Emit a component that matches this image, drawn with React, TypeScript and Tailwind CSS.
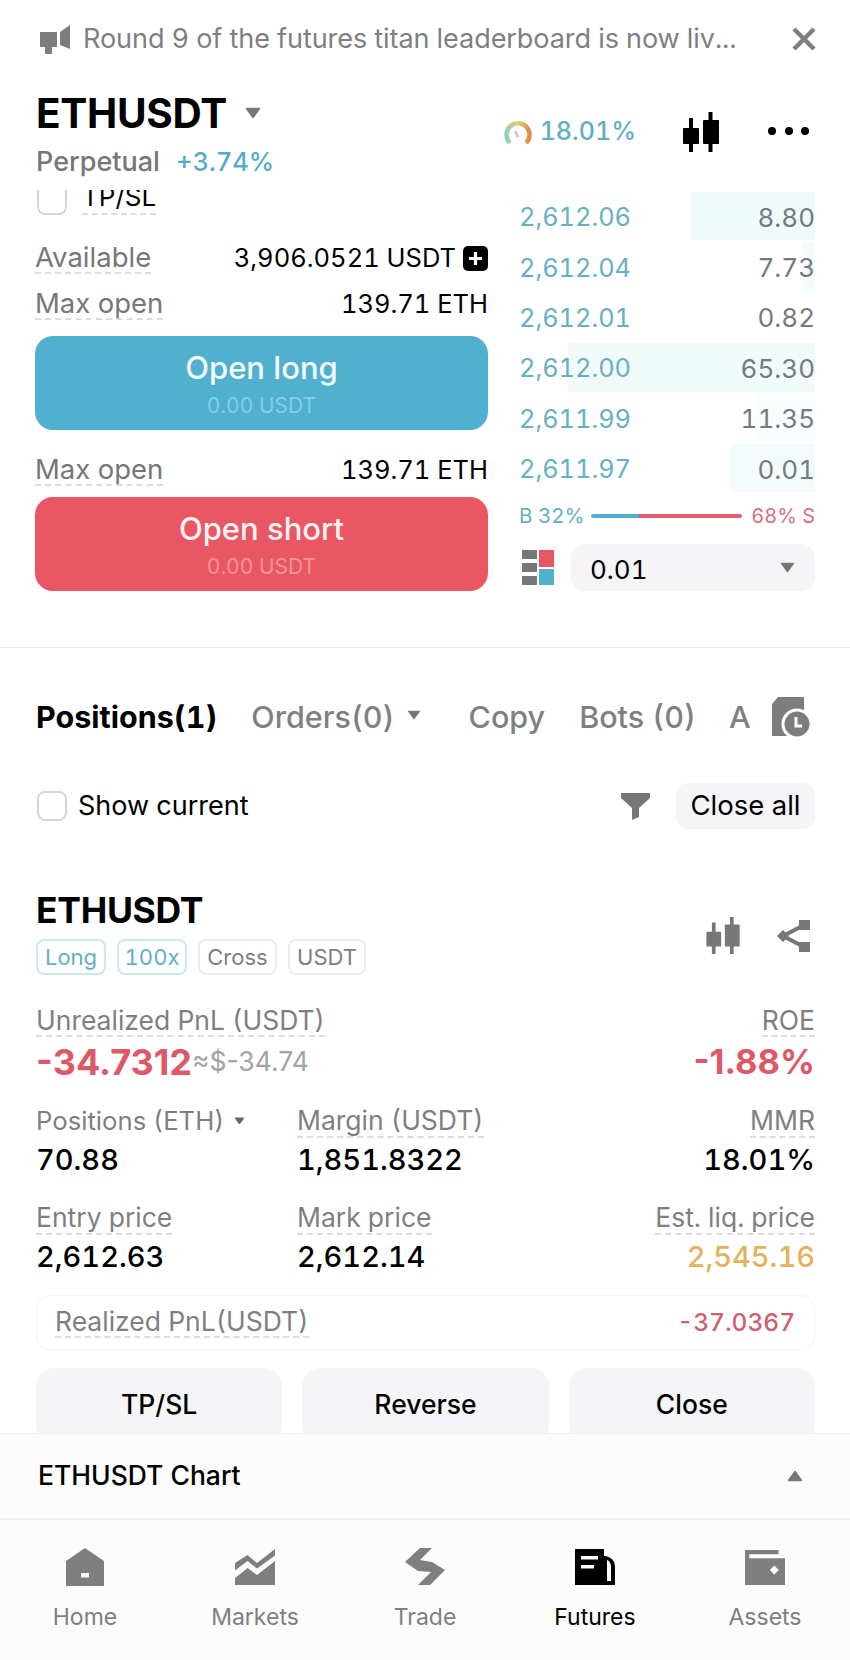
import React from 'react';

const Caret = ({ className = '' }: { className?: string }) => (
  <svg viewBox="0 0 16 12" className={className} fill="currentColor">
    <path d="M1.5 1.5h13L8 10.5z" stroke="currentColor" strokeWidth="1.5" strokeLinejoin="round" />
  </svg>
);

const Candles = ({ className = '' }: { className?: string }) => (
  <svg viewBox="0 0 36 40" className={className} fill="currentColor">
    <rect x="6" y="6" width="4" height="34" />
    <rect x="0" y="16" width="16" height="16" rx="1" />
    <rect x="25.5" y="0" width="4" height="40" />
    <rect x="20" y="8" width="16" height="24" rx="1" />
  </svg>
);

const Dashed = ({ children, className = '' }: { children: React.ReactNode; className?: string }) => (
  <span className={`border-b-2 border-dashed border-[#dcdcdc] leading-[30px] ${className}`}>{children}</span>
);

const Checkbox = () => <span className="block w-[30px] h-[30px] shrink-0 rounded-lg border-2 border-[#d6d6d6] bg-white" />;

const book = [
  { price: '2,612.06', size: '8.80', depth: 'w-[124px] bg-[#f0fbfb]' },
  { price: '2,612.04', size: '7.73', depth: 'w-[12px] bg-[#f5fcfc]' },
  { price: '2,612.01', size: '0.82', depth: 'w-0' },
  { price: '2,612.00', size: '65.30', depth: 'w-[247px] bg-[#f1fbfc]' },
  { price: '2,611.99', size: '11.35', depth: 'w-[60px] bg-[#f9fdfd]' },
  { price: '2,611.97', size: '0.01', depth: 'w-[85px] bg-[#f5fbfc]' },
];

const tabs = [
  {
    label: 'Home',
    icon: <path d="M20 1 39 14V39H1V14zM16 26v4.5h8V26z" fillRule="evenodd" />,
  },
  {
    label: 'Markets',
    icon: (
      <>
        <path d="M0 16 12.5 8 22 16 40 2v6.5L22 21.5 12.5 14 0 23.5z" />
        <path d="M0 31 12.5 21 22 28 40 14V38H0z" />
      </>
    ),
  },
  {
    label: 'Trade',
    icon: <path d="M15 1h12L15 13l12 2 13 8-15 15H13l13-13-13-1L0 15z" />,
  },
  {
    label: 'Futures',
    active: true,
    icon: (
      <path
        d="M0 2h29v7c7 0 11 5 11 11v18H0zM6 9v3.5h17V9zM6 18v3.5h13V18zM32 13v21h4V20c0-3-1-6-4-7z"
        fillRule="evenodd"
      />
    ),
  },
  {
    label: 'Assets',
    icon: <path d="M0 3h33.5v4.3H4.3v4H40V38H0zM29.3 18.5 24.8 23l4.5 4.5 4.5-4.5z" fillRule="evenodd" />,
  },
];

export default function App() {
  return (
    <div
      className="w-[850px] h-[1660px] overflow-hidden bg-white flex flex-col text-black tabular-nums"
      style={{ fontFamily: 'Inter, "Liberation Sans", sans-serif' }}
    >
      {/* Notice */}
      <div className="h-[78px] shrink-0 flex items-center pl-[39px] pr-[34px]">
        <svg viewBox="0 0 31 29" className="w-[31px] h-[29px] text-[#7d7d7d]" fill="currentColor">
          <path d="M1 7h17v15H13v7H6v-7H1zM21 7 31 0v24l-10-4z" />
        </svg>
        <div className="ml-[13px] flex-1 text-[27.1px] tracking-[-0.1px] text-[#7f7f7f] whitespace-nowrap overflow-hidden">
          Round 9 of the futures titan leaderboard is now liv...
        </div>
        <svg viewBox="0 0 24 24" className="w-[24px] h-[24px] text-[#808080]" fill="none" stroke="currentColor" strokeWidth="4.5">
          <path d="M2 2l20 20M22 2 2 22" />
        </svg>
      </div>

      {/* Symbol header */}
      <div className="h-[112px] shrink-0 pl-[36px] pr-[41px] flex items-start justify-between">
        <div>
          <div className="flex items-center h-[58px] pt-[15px]">
            <span className="text-[40.5px] font-bold leading-none tracking-[-0.3px]">ETHUSDT</span>
            <Caret className="w-[16px] h-[12px] ml-[18px] text-[#777] mb-[4px]" />
          </div>
          <div className="flex items-center mt-[11px] h-[30px]">
            <span className="text-[27px] font-medium text-[#777]">Perpetual</span>
            <span className="text-[25.5px] font-medium text-[#52aec8] ml-[16px]">+3.74%</span>
          </div>
        </div>
        <div className="flex items-center pt-[34px]">
          <svg viewBox="0 0 28 25" className="w-[28px] h-[25px]" fill="none" strokeWidth="4.5">
            <defs>
              <linearGradient id="gauge" x1="0" x2="1" y1="0" y2="0">
                <stop offset="0" stopColor="#8fd0b8" />
                <stop offset="0.5" stopColor="#e8d070" />
                <stop offset="1" stopColor="#dd8a4a" />
              </linearGradient>
            </defs>
            <path d="M6 23a11.5 11.5 0 1 1 16 0" stroke="url(#gauge)" />
            <path d="M11 11l3 6" stroke="#c4c4c4" strokeWidth="2.5" />
          </svg>
          <span className="ml-[8px] text-[25px] font-medium text-[#5fb0c6]">18.01%</span>
          <Candles className="w-[36px] h-[40px] ml-[47px] text-black" />
          <div className="flex gap-[8.5px] ml-[49px] pb-[2px]">
            <span className="w-[8px] h-[8px] rounded-full bg-black" />
            <span className="w-[8px] h-[8px] rounded-full bg-black" />
            <span className="w-[8px] h-[8px] rounded-full bg-black" />
          </div>
        </div>
      </div>

      {/* Order form + book */}
      <div className="h-[458px] shrink-0 flex pl-[35px] pr-[35px] border-b border-[#e9e9ec]">
        <div className="w-[453px] shrink-0">
          <div className="h-[25px] flex items-end overflow-hidden pl-[2px]">
            <Checkbox />
            <span className="ml-[15px] text-[26px] leading-[30px] h-[33px] shrink-0 border-b-2 border-dashed border-[#dcdcdc]">TP/SL</span>
          </div>
          <div className="flex items-center justify-between mt-[27px] h-[32px] text-[25.5px]">
            <Dashed className="text-[#777] text-[27.5px]">Available</Dashed>
            <div className="flex items-center">
              <span>3,906.0521 USDT</span>
              <span className="ml-[7px] w-[25px] h-[25px] rounded-[5px] bg-black text-white flex items-center justify-center">
                <svg viewBox="0 0 14 14" className="w-[15px] h-[15px]" stroke="currentColor" strokeWidth="3">
                  <path d="M7 1v12M1 7h12" />
                </svg>
              </span>
            </div>
          </div>
          <div className="flex items-center justify-between mt-[14px] h-[32px] text-[25.5px]">
            <Dashed className="text-[#777] text-[27.5px]">Max open</Dashed>
            <span>139.71 ETH</span>
          </div>
          <button className="mt-[16px] w-full h-[94px] pt-[8px] rounded-[18px] bg-[#52b0cf] flex flex-col items-center justify-center">
            <span className="text-[31px] font-medium leading-[38px] text-[#f3fbfb]">Open long</span>
            <span className="text-[21px] leading-[38px] text-[#7fd0ea]">0.00 USDT</span>
          </button>
          <div className="flex items-center justify-between mt-[24px] h-[32px] text-[25.5px]">
            <Dashed className="text-[#777] text-[27.5px]">Max open</Dashed>
            <span>139.71 ETH</span>
          </div>
          <button className="mt-[11px] w-full h-[94px] pt-[8px] rounded-[18px] bg-[#e95764] flex flex-col items-center justify-center">
            <span className="text-[31px] font-medium leading-[38px] text-[#fdf3f3]">Open short</span>
            <span className="text-[21px] leading-[38px] text-[#f8939b]">0.00 USDT</span>
          </button>
        </div>

        <div className="flex-1 ml-[31px] pt-[2px]">
          {book.map((row) => (
            <div key={row.price} className="relative h-[50.4px] flex items-center justify-between text-[26px]">
              <div className={`absolute right-0 top-0 bottom-[2px] ${row.depth}`} />
              <span className="relative text-[25.3px] text-[#64b0c4]">{row.price}</span>
              <span className="relative text-[#737b7d]">{row.size}</span>
            </div>
          ))}
          <div className="flex items-center h-[20px] mt-[12px] text-[20.5px]">
            <span className="text-[#64b0c4] w-[72px] whitespace-nowrap">B 32%</span>
            <div className="flex-1 flex h-[4px] rounded-full overflow-hidden">
              <div className="w-[32%] bg-[#52b0cf]" />
              <div className="flex-1 bg-[#e2606d]" />
            </div>
            <span className="text-[20px] text-[#d8707e] ml-[9px] whitespace-nowrap">68% S</span>
          </div>
          <div className="flex items-center mt-[18px]">
            <div className="ml-[3px] w-[32px] h-[35px] grid grid-cols-2 gap-[2px]">
              <div className="flex flex-col justify-between">
                <span className="h-[9px] bg-[#777]" />
                <span className="h-[9px] bg-[#777]" />
                <span className="h-[9px] bg-[#777]" />
              </div>
              <div className="flex flex-col gap-[2px]">
                <span className="flex-1 bg-[#e95764]" />
                <span className="flex-1 bg-[#52b0cf]" />
              </div>
            </div>
            <div className="ml-[17px] flex-1 h-[47px] rounded-[14px] bg-[#f5f5f7] flex items-center justify-between pl-[19px] pr-[20px]">
              <span className="text-[26px] pt-[3px]">0.01</span>
              <Caret className="w-[15px] h-[11px] text-[#777]" />
            </div>
          </div>
        </div>
      </div>

      {/* Tabs */}
      <div className="h-[111px] shrink-0 pl-[36px] pr-[40px] pt-[27px] flex items-center text-[30.5px] font-medium text-[#808080] whitespace-nowrap">
        <span className="font-bold text-black">Positions(1)</span>
        <span className="ml-[34px]">Orders(0)</span>
        <Caret className="w-[14px] h-[10px] ml-[12px] mb-[4px] text-[#777]" />
        <span className="ml-[48px]">Copy</span>
        <span className="ml-[34px]">Bots (0)</span>
        <span className="ml-[33px]">A</span>
        <svg viewBox="0 0 38 41" className="w-[38px] h-[41px] ml-auto text-[#7d7d7d]" fill="currentColor">
          <path d="M6 0H32V39H0V7z" />
          <circle cx="25" cy="27" r="15.5" fill="#fff" />
          <circle cx="25" cy="27" r="12.5" />
          <path d="M24 20v9h6" fill="none" stroke="#fff" strokeWidth="3" />
        </svg>
      </div>

      {/* Show current */}
      <div className="mt-[24px] h-[46px] shrink-0 pl-[37px] pr-[35px] flex items-center">
        <Checkbox />
        <span className="ml-[11px] text-[27px]">Show current</span>
        <svg viewBox="0 0 29 27" className="w-[29px] h-[27px] ml-auto text-[#777]" fill="currentColor">
          <path d="M0 0h29v5L18 15v9l-7 3V15L0 5z" />
        </svg>
        <button className="ml-[26px] w-[139px] h-[46px] rounded-[12px] bg-[#f5f5f7] text-[27.5px]">Close all</button>
      </div>

      {/* Position card */}
      <div className="mt-[62px] shrink-0 pl-[36px] pr-[35px]">
        <div className="flex justify-between items-end">
          <div>
            <div className="text-[35.5px] font-bold leading-[40px] tracking-[-0.3px]">ETHUSDT</div>
            <div className="flex gap-[11px] mt-[8px] text-[22px]">
              <span className="w-[70px] h-[36px] rounded-[8px] border-2 border-[#c8eaee] text-[#5fb0c6] flex items-center justify-center">Long</span>
              <span className="w-[70px] h-[36px] rounded-[8px] border-2 border-[#c8eaee] text-[#5fb0c6] flex items-center justify-center">100x</span>
              <span className="w-[79px] h-[36px] rounded-[8px] border-2 border-[#ececec] text-[#808080] flex items-center justify-center">Cross</span>
              <span className="w-[78px] h-[36px] rounded-[8px] border-2 border-[#ececec] text-[#808080] flex items-center justify-center">USDT</span>
            </div>
          </div>
          <div className="flex items-center gap-[37px] pb-[21px] pr-[5px]">
            <Candles className="w-[34px] h-[37px] text-[#777]" />
            <svg viewBox="0 0 33 32" className="w-[33px] h-[32px] text-[#777]">
              <path d="M27 5 6 16l21 11" fill="none" stroke="currentColor" strokeWidth="4" />
              <rect x="22" y="0" width="11" height="10" fill="currentColor" />
              <rect x="22" y="22" width="11" height="10" fill="currentColor" />
              <path d="M0 16l6-6 6 6-6 6z" fill="currentColor" />
            </svg>
          </div>
        </div>

        <div className="mt-[30px] flex justify-between text-[26.5px] text-[#7f7f7f]">
          <Dashed>Unrealized PnL (USDT)</Dashed>
          <Dashed>ROE</Dashed>
        </div>
        <div className="mt-[5px] flex justify-between items-center h-[40px] normal-nums">
          <div className="flex items-center">
            <span className="text-[36px] font-bold text-[#df5867]">-34.7312</span>
            <span className="text-[26.5px] text-[#a3a3a3]">≈$-34.74</span>
          </div>
          <span className="text-[34.5px] font-bold text-[#df5867]">-1.88%</span>
        </div>

        <div className="mt-[19px] grid grid-cols-[261px_1fr_auto] text-[26.5px] text-[#7f7f7f]">
          <div className="flex items-center gap-[10px] leading-[30px] text-[25.7px]">
            Positions (ETH)
            <Caret className="w-[11px] h-[8px] text-[#666]" />
          </div>
          <div><Dashed>Margin (USDT)</Dashed></div>
          <div className="text-right"><Dashed>MMR</Dashed></div>
        </div>
        <div className="mt-[1px] grid grid-cols-[261px_1fr_auto] text-[29px] font-medium leading-[36px]">
          <span>70.88</span>
          <span>1,851.8322</span>
          <span>18.01%</span>
        </div>

        <div className="mt-[20px] grid grid-cols-[261px_1fr_auto] text-[26.5px] text-[#7f7f7f]">
          <div><Dashed>Entry price</Dashed></div>
          <div><Dashed>Mark price</Dashed></div>
          <div><Dashed>Est. liq. price</Dashed></div>
        </div>
        <div className="mt-[1px] grid grid-cols-[261px_1fr_auto] text-[29px] font-medium leading-[36px]">
          <span>2,612.63</span>
          <span>2,612.14</span>
          <span className="text-right text-[#e3b25a]">2,545.16</span>
        </div>

        <div className="mt-[20px] h-[55px] rounded-[14px] border border-[#f5f5f7] pl-[18px] pr-[19px] flex items-center justify-between">
          <Dashed className="text-[26.5px] text-[#7f7f7f]">Realized PnL(USDT)</Dashed>
          <span className="text-[24.5px] font-medium text-[#cf5f6f]">-37.0367</span>
        </div>

        <div className="mt-[18px] grid grid-cols-3 gap-[20px] h-[65px] overflow-hidden">
          {['TP/SL', 'Reverse', 'Close'].map((label) => (
            <button key={label} className="h-[75px] rounded-[18px] bg-[#f5f5f7] text-[26.5px] font-medium">
              {label}
            </button>
          ))}
        </div>
      </div>

      {/* Chart bar */}
      <div className="h-[87px] shrink-0 border-t border-b-2 border-[#f1f1f3] bg-[#fdfcfd] pl-[38px] pr-[47px] flex items-center justify-between">
        <span className="text-[26.5px] font-medium">ETHUSDT Chart</span>
        <Caret className="w-[16px] h-[12px] rotate-180 text-[#777]" />
      </div>

      {/* Tab bar */}
      <div className="flex-1 bg-[#fdfcfd] grid grid-cols-5">
        {tabs.map((tab) => (
          <div key={tab.label} className={`flex flex-col items-center pt-[27px] ${tab.active ? 'text-black' : 'text-[#7f7f7f]'}`}>
            <svg viewBox="0 0 40 40" className="w-[40px] h-[40px]" fill="currentColor">
              {tab.icon}
            </svg>
            <span className="mt-[16px] text-[23px] leading-[28px]">{tab.label}</span>
          </div>
        ))}
      </div>
    </div>
  );
}
